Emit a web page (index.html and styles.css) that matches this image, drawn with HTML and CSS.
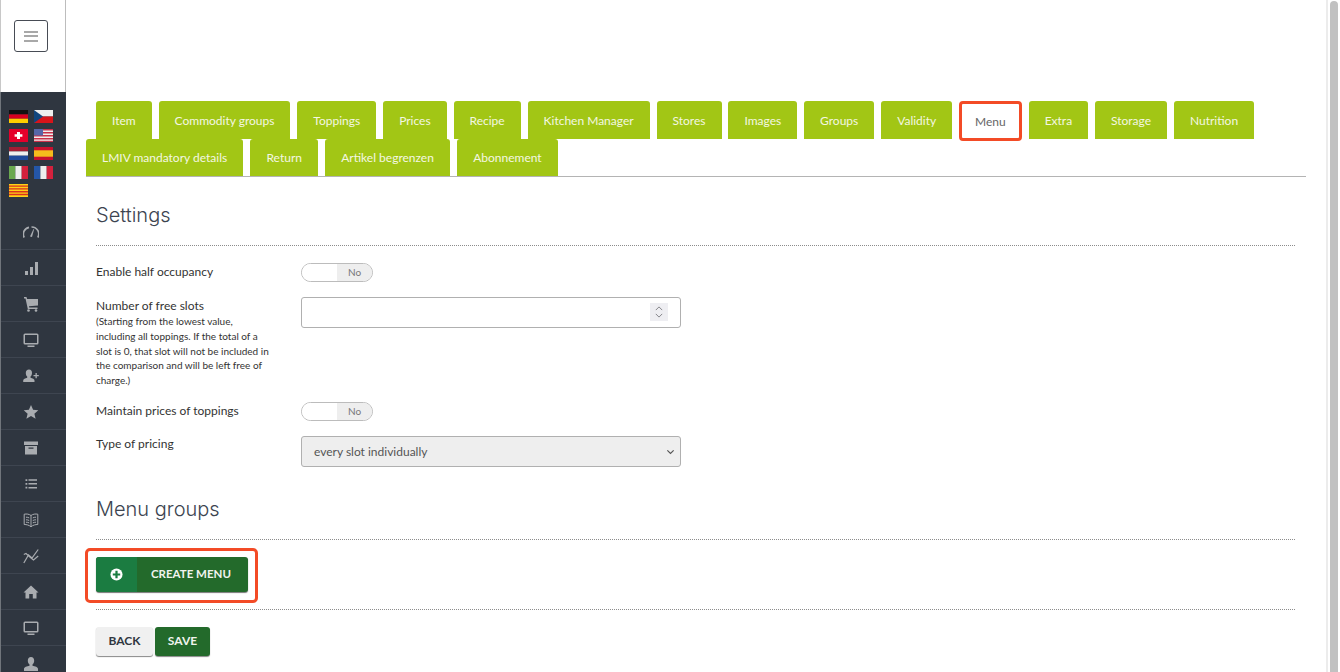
FILE: index.html
```html
<!DOCTYPE html>
<html lang="en">

<head>
    <meta charset="UTF-8">
    <title>Edit article</title>
    <link rel="stylesheet" href="styles.css">
</head>

<body>
    <div class="wrapper">
        <!-- Sidebar -->
        <aside class="sidebar">
            <div class="sidebar-top">
                <button class="burger" type="button"><span></span><span></span><span></span></button>
            </div>
            <div class="sidebar-dark">
                <div class="flags">
                    <svg class="flag" viewBox="0 0 19 13"><rect width="19" height="4.4" fill="#111"/><rect y="4.4" width="19" height="4.3" fill="#d8001f"/><rect y="8.7" width="19" height="4.3" fill="#ffce00"/></svg>
                    <svg class="flag" viewBox="0 0 19 13"><rect width="19" height="6.5" fill="#eee"/><rect y="6.5" width="19" height="6.5" fill="#d7141a"/><path d="M0 0l9 6.5L0 13z" fill="#11457e"/></svg>
                    <svg class="flag" viewBox="0 0 19 13"><rect width="19" height="13" fill="#e4002b"/><path d="M8 3h3v2.200h2.400v2.600H11V10H8V7.800H5.600V5.200H8z" fill="#fff"/></svg>
                    <svg class="flag" viewBox="0 0 19 13"><rect width="19" height="13" fill="#eee"/><path d="M0 0h19v1.500H0zM0 3h19v1.500H0zM0 6h19v1.500H0zM0 9h19v1.500H0zM0 11.700h19V13H0z" fill="#c8314a"/><rect width="9" height="6.500" fill="#5566a8"/></svg>
                    <svg class="flag" viewBox="0 0 19 13"><rect width="19" height="4.400" fill="#a21b33"/><rect y="4.400" width="19" height="4.300" fill="#eee"/><rect y="8.700" width="19" height="4.300" fill="#1f4a9c"/></svg>
                    <svg class="flag" viewBox="0 0 19 13"><rect width="19" height="13" fill="#c8102e"/><rect y="3.300" width="19" height="6.400" fill="#f5bc1c"/></svg>
                    <svg class="flag" viewBox="0 0 19 13"><rect width="6.400" height="13" fill="#6aa84f"/><rect x="6.400" width="6.300" height="13" fill="#eee"/><rect x="12.700" width="6.300" height="13" fill="#d4213d"/></svg>
                    <svg class="flag" viewBox="0 0 19 13"><rect width="6.400" height="13" fill="#2456a8"/><rect x="6.400" width="6.300" height="13" fill="#eee"/><rect x="12.700" width="6.300" height="13" fill="#d4213d"/></svg>
                    <svg class="flag" viewBox="0 0 19 13"><rect width="19" height="13" fill="#fcd116"/><path d="M0 1.400h19v1.400H0zM0 4.200h19v1.400H0zM0 7h19v1.400H0zM0 9.800h19v1.400H0z" fill="#d8301f"/></svg>
                </div>
                <ul class="side-menu">
                    <!-- gauge -->
                    <li><svg viewBox="0 0 16 16"><path d="M1.200 13.500A7 7 0 0 1 6 3.300M8.500 3a7 7 0 0 1 6.300 10.500" fill="none" stroke="#a9acb0" stroke-width="1.700"/><path d="M7 12.500L10.500 5l.6.300L9 13z" fill="#a9acb0"/></svg></li>
                    <!-- bars -->
                    <li><svg viewBox="0 0 16 16"><path d="M2 11h3v4H2zM7 7h3v8H7zM12 2h3v13h-3z" fill="#a9acb0"/></svg></li>
                    <!-- cart -->
                    <li><svg viewBox="0 0 16 16"><path d="M1 1h2.500l.6 2H15v6.500l-9 .8.200 1.200H14.500V13H4.800L2.500 2.500H1z" fill="#a9acb0"/><circle cx="5.500" cy="14.500" r="1.300" fill="#a9acb0"/><circle cx="13" cy="14.500" r="1.300" fill="#a9acb0"/></svg></li>
                    <!-- monitor -->
                    <li><svg viewBox="0 0 16 16"><path d="M2 1.500h12a1.500 1.500 0 0 1 1.500 1.500v8a1.500 1.500 0 0 1-1.500 1.500H2A1.500 1.500 0 0 1 .5 11V3A1.500 1.500 0 0 1 2 1.500zM2 3v8h12V3zM4.500 13.500h7V15h-7z" fill="#a9acb0" fill-rule="evenodd"/></svg></li>
                    <!-- user plus -->
                    <li><svg viewBox="0 0 16 16"><path d="M6 1.500c2 0 3 1.500 3 3.500 0 1.500-.7 3-1.500 3.600v1.200c2 .6 4 1.300 4 2.700V14H.200v-1.500c0-1.400 2-2.100 4-2.700V8.600C3.400 8 2.800 6.500 2.800 5 2.800 3 4 1.500 6 1.500z" fill="#a9acb0"/><path d="M12.500 5v2h-2v1.300h2v2h1.300v-2h2V7h-2V5z" fill="#a9acb0"/></svg></li>
                    <!-- star -->
                    <li><svg viewBox="0 0 16 16"><path d="M8 1l2.100 4.800 5.200.5-3.900 3.400 1.200 5.100L8 12.100l-4.600 2.700 1.200-5.100L.7 6.300l5.200-.5z" fill="#a9acb0"/></svg></li>
                    <!-- archive -->
                    <li><svg viewBox="0 0 16 16"><path d="M1 1.500h14V5H1zM2 6h12v8.500H2zM5.500 7.500v1.300h5V7.500z" fill="#a9acb0" fill-rule="evenodd"/></svg></li>
                    <!-- list -->
                    <li><svg viewBox="0 0 16 16"><path d="M2.500 3.200h1.800V5H2.500zM2.500 7h1.800v1.800H2.500zM2.500 10.800h1.800v1.800H2.500zM5.500 3.300h8.500v1.500H5.500zM5.500 7.100h8.500v1.500H5.500zM5.500 10.900h8.500v1.500H5.500z" fill="#a9acb0"/></svg></li>
                    <!-- book -->
                    <li><svg viewBox="0 0 16 16"><path d="M8 3.500C6 2 3.500 1.800 1.200 2.200V12.500C3.500 12.500 6 13 8 14.800 10 13 12.500 12.500 14.800 12.500V2.200C12.500 1.800 10 2 8 3.500zM8 3.500V14.800M3 5.200c1.200 0 2.200.2 3.200.7M3 7.800c1.200 0 2.200.2 3.200.7M3 10.200c1.200 0 2.200.2 3.200.7M13 5.200c-1.200 0-2.200.2-3.200.7M13 7.800c-1.200 0-2.200.2-3.200.7M13 10.200c-1.200 0-2.200.2-3.200.7" fill="none" stroke="#a9acb0" stroke-width="1"/></svg></li>
                    <!-- lines -->
                    <li><svg viewBox="0 0 16 16"><path d="M.8 15L5.500 7l3.500 3L15.200 1.500M.8 6.500L3 5.500l5 4.500 2.500 2 4.700-4" fill="none" stroke="#a9acb0" stroke-width="1.200"/></svg></li>
                    <!-- home -->
                    <li><svg viewBox="0 0 16 16"><path d="M8 1.500L15.500 8.500H13.500V14.500H9.800V10H6.200V14.500H2.500V8.500H.5z" fill="#a9acb0"/></svg></li>
                    <!-- monitor -->
                    <li><svg viewBox="0 0 16 16"><path d="M2 1.500h12a1.500 1.500 0 0 1 1.500 1.500v8a1.500 1.500 0 0 1-1.500 1.500H2A1.500 1.500 0 0 1 .5 11V3A1.500 1.500 0 0 1 2 1.500zM2 3v8h12V3zM4.500 13.500h7V15h-7z" fill="#a9acb0" fill-rule="evenodd"/></svg></li>
                    <!-- user -->
                    <li><svg viewBox="0 0 16 16"><path d="M8 1c2 0 3.200 1.500 3.200 3.700 0 1.500-.8 3-1.700 3.700v1.400c2.500.6 5.500 1.300 5.500 3.200V15H1v-2c0-1.900 3-2.600 5.500-3.200V8.400C5.600 7.700 4.800 6.200 4.800 4.700 4.800 2.500 6 1 8 1z" fill="#a9acb0"/></svg></li>
                </ul>
            </div>
        </aside>

        <!-- Main content -->
        <main class="content">
            <div class="tabs">
                <div class="tab-row first">
                    <a class="tab">Item</a>
                    <a class="tab">Commodity groups</a>
                    <a class="tab">Toppings</a>
                    <a class="tab">Prices</a>
                    <a class="tab">Recipe</a>
                    <a class="tab">Kitchen Manager</a>
                    <a class="tab">Stores</a>
                    <a class="tab">Images</a>
                    <a class="tab">Groups</a>
                    <a class="tab">Validity</a>
                    <a class="tab active">Menu</a>
                    <a class="tab">Extra</a>
                    <a class="tab">Storage</a>
                    <a class="tab">Nutrition</a>
                </div>
                <div class="tab-row second">
                    <a class="tab">LMIV mandatory details</a>
                    <a class="tab">Return</a>
                    <a class="tab">Artikel begrenzen</a>
                    <a class="tab">Abonnement</a>
                </div>
            </div>

            <div class="panel">
                <h2 class="section-title">Settings</h2>
                <div class="divider"></div>

                <div class="form-row toggle-row">
                    <label>Enable half occupancy</label>
                    <div class="toggle"><span class="toggle-off"></span><span class="toggle-no">No</span></div>
                </div>
                <div class="form-row slots-row">
                    <label>Number of free slots
                        <small>(Starting from the lowest value, including all toppings. If the total of a slot is 0, that slot will not be included in the comparison and will be left free of charge.)</small>
                    </label>
                    <div class="input-box">
                        <span class="spinner">
                            <svg viewBox="0 0 10 6"><path d="M1 5L5 1l4 4" fill="none" stroke="#77777c" stroke-width="1.100"/></svg>
                            <svg viewBox="0 0 10 6"><path d="M1 1l4 4 4-4" fill="none" stroke="#77777c" stroke-width="1.100"/></svg>
                        </span>
                    </div>
                </div>
                <div class="form-row toggle-row prices-row">
                    <label>Maintain prices of toppings</label>
                    <div class="toggle"><span class="toggle-off"></span><span class="toggle-no">No</span></div>
                </div>
                <div class="form-row select-row">
                    <label>Type of pricing</label>
                    <div class="select-box">
                        <span>every slot individually</span>
                        <svg viewBox="0 0 10 6"><path d="M1.500 1.200L5 4.700l3.500-3.500" fill="none" stroke="#555" stroke-width="1.300"/></svg>
                    </div>
                </div>

                <h2 class="section-title groups-title">Menu groups</h2>
                <div class="divider"></div>

                <div class="create-wrap">
                    <div class="highlight">
                        <button class="btn-create" type="button">
                            <span class="btn-icon">
                                <svg viewBox="0 0 14 14"><circle cx="7" cy="7" r="6.500" fill="#fff"/><path d="M5.800 3h2.400v2.800H11v2.400H8.200V11H5.800V8.200H3V5.800h2.800z" fill="#1b7c41"/></svg>
                            </span>
                            <span class="btn-label">CREATE MENU</span>
                        </button>
                    </div>
                </div>
                <div class="divider"></div>

                <div class="actions">
                    <button class="btn-back" type="button">BACK</button>
                    <button class="btn-save" type="button">SAVE</button>
                </div>
            </div>
        </main>

        <div class="scrollbar"><div class="thumb"></div></div>
    </div>
</body>

</html>
```
FILE: styles.css
```css
/* Page */
html, body {
    margin: 0;
    padding: 0;
    height: 100%;
    overflow: hidden;
}

body {
    font-family: 'Lato', 'Liberation Sans', sans-serif;
    font-size: 12px;
    color: #333;
    background: #fff;
}

.wrapper {
    display: flex;
    height: 672px;
    overflow: hidden;
}

/* Sidebar */
.sidebar {
    flex: 0 0 66px;
    display: flex;
    flex-direction: column;
    box-sizing: border-box;
}

.sidebar-top {
    height: 92px;
    border-right: 1px solid #bdbdbd;
    border-left: 1px solid #c8c8c8;
    box-sizing: border-box;
    padding: 20px 0 0 13px;
}

.burger {
    display: flex;
    flex-direction: column;
    justify-content: center;
    gap: 2.500px;
    width: 34px;
    height: 32px;
    padding: 0 9px;
    background: #fff;
    border: 1px solid #474c55;
    border-radius: 3px;
    box-sizing: border-box;
}

.burger span {
    display: block;
    height: 2px;
    width: 14px;
    background: #a8a8a8;
}

.sidebar-dark {
    flex: 1;
    background: #2f3640;
    border-left: 1px solid #70757b;
    overflow: hidden;
}

.flags {
    display: grid;
    grid-template-columns: 19px 19px;
    grid-auto-rows: 13px;
    column-gap: 6px;
    row-gap: 5.500px;
    padding: 18px 0 0 8px;
    height: 122px;
    box-sizing: border-box;
}

.flag {
    display: block;
    width: 19px;
    height: 13px;
}

.side-menu {
    list-style: none;
    margin: 0;
    padding: 0;
}

.side-menu li {
    height: 36px;
    box-sizing: border-box;
    border-bottom: 1px solid #3e4550;
    display: flex;
    align-items: center;
    justify-content: center;
    padding-right: 5px;
}

.side-menu svg {
    width: 16px;
    height: 16px;
}

/* Main */
.content {
    flex: 1;
    min-width: 0;
    padding: 101px 0 0 20px;
}

.tabs {
    width: 1220px;
    border-bottom: 1px solid #b4b4b4;
    box-sizing: border-box;
}

.tab-row {
    display: flex;
    height: 38px;
}

.tab-row.first {
    padding-left: 10px;
    gap: 6.900px;
}

.tab-row.second {
    height: 37px;
    gap: 7.300px;
}

.tab {
    display: flex;
    align-items: center;
    height: 38px;
    box-sizing: border-box;
    padding: 0 16px;
    background: #a2c615;
    color: #f4f7e2;
    font-size: 12px;
    border-radius: 3px 3px 0 0;
}

.tab-row.second .tab {
    height: 37px;
}

.tab.active {
    background: #fff;
    color: #666;
    border: 3px solid #f34b26;
    border-radius: 4px;
    padding: 0 13px;
    height: 40px;
}

.panel {
    padding: 0 11px 0 10px;
    width: 1199px;
}

.section-title {
    margin: 0;
    font-family: 'Inter', 'Liberation Sans', sans-serif;
    font-weight: 300;
    font-size: 20px;
    line-height: 24px;
    color: #3c4450;
    padding-top: 26px;
    padding-bottom: 18px;
}

.groups-title {
    padding-top: 30px;
    padding-bottom: 18px;
}

.divider {
    border-top: 1px dotted #8c8c8c;
}

.form-row {
    display: flex;
}

.form-row label {
    flex: 0 0 205px;
    width: 205px;
    font-size: 12px;
    line-height: 18px;
    color: #333;
}

.form-row small {
    display: block;
    width: 178px;
    margin-top: -1px;
    font-size: 10px;
    line-height: 14.800px;
}

.toggle-row {
    margin-top: 17px;
    height: 19px;
}

.toggle-row label {
    line-height: 18px;
}

.toggle {
    display: flex;
    width: 72px;
    height: 19px;
    border: 1px solid #bcbcbc;
    border-radius: 10px;
    box-sizing: border-box;
    overflow: hidden;
}

.toggle-off {
    width: 35px;
    background: #fff;
}

.toggle-no {
    flex: 1;
    background: #eeeeee;
    color: #777;
    font-size: 10px;
    line-height: 17px;
    text-align: center;
}

.slots-row {
    margin-top: 15px;
    height: 90px;
}

.input-box {
    position: relative;
    width: 380px;
    height: 31px;
    border: 1px solid #b0b0b0;
    border-radius: 3px;
    box-sizing: border-box;
}

.spinner {
    position: absolute;
    top: 5px;
    right: 12px;
    display: flex;
    flex-direction: column;
    align-items: center;
    justify-content: center;
    gap: 2px;
    width: 18px;
    height: 18px;
    background: #eeeef2;
}

.spinner svg {
    width: 8px;
    height: 5px;
}

.prices-row {
    margin-top: 15px;
}

.select-row {
    margin-top: 15px;
    height: 31px;
}

.select-row label {
    line-height: 16px;
}

.select-box {
    display: flex;
    align-items: center;
    justify-content: space-between;
    width: 380px;
    height: 31px;
    padding: 0 5px 0 12px;
    background: #eeeeee;
    border: 1px solid #b0b0b0;
    border-radius: 3px;
    box-sizing: border-box;
    font-size: 12px;
    color: #555;
}

.select-box svg {
    width: 9px;
    height: 6px;
}

.create-wrap {
    padding: 8px 0 6px;
    margin-left: -11px;
}

.highlight {
    width: 173px;
    height: 55px;
    box-sizing: border-box;
    padding: 6px 0 0 8px;
    border: 3px solid #f34b26;
    border-radius: 5px;
}

.btn-create {
    display: flex;
    width: 152px;
    height: 35px;
    padding: 0;
    border: 0;
    border-radius: 3px;
    overflow: hidden;
    background: #236a2b;
    box-shadow: 0 1px 1px #777;
    font-family: inherit;
}

.btn-icon {
    display: flex;
    align-items: center;
    justify-content: center;
    width: 41px;
    height: 100%;
    background: #1b7c41;
}

.btn-icon svg {
    width: 13px;
    height: 13px;
}

.btn-label {
    flex: 1;
    align-self: center;
    color: #f0f4ee;
    font-size: 11.500px;
    font-weight: 700;
    text-align: left;
    padding-left: 14px;
    padding-bottom: 2px;
}

.actions {
    display: flex;
    gap: 2px;
    padding-top: 17px;
}

.btn-back,
.btn-save {
    height: 29px;
    border: 0;
    border-radius: 3px;
    font-family: inherit;
    font-size: 12px;
    font-weight: 700;
    padding: 0 0 2px;
    box-shadow: 0 1px 1px #888;
}

.btn-back {
    width: 57px;
    background: #f0f0f0;
    color: #2f3640;
}

.btn-save {
    width: 55px;
    background: #236a2b;
    color: #f0f4ee;
}

/* Scrollbar */
.scrollbar {
    position: absolute;
    top: 0;
    right: 0;
    width: 14px;
    height: 672px;
    background: #fff;
    border-left: 2px solid #ececec;
    box-sizing: border-box;
}

.thumb {
    width: 8px;
    height: 671px;
    margin: 1px 0 0 2px;
    background: #c1c1c1;
    border-radius: 4px 4px 0 0;
}
```
